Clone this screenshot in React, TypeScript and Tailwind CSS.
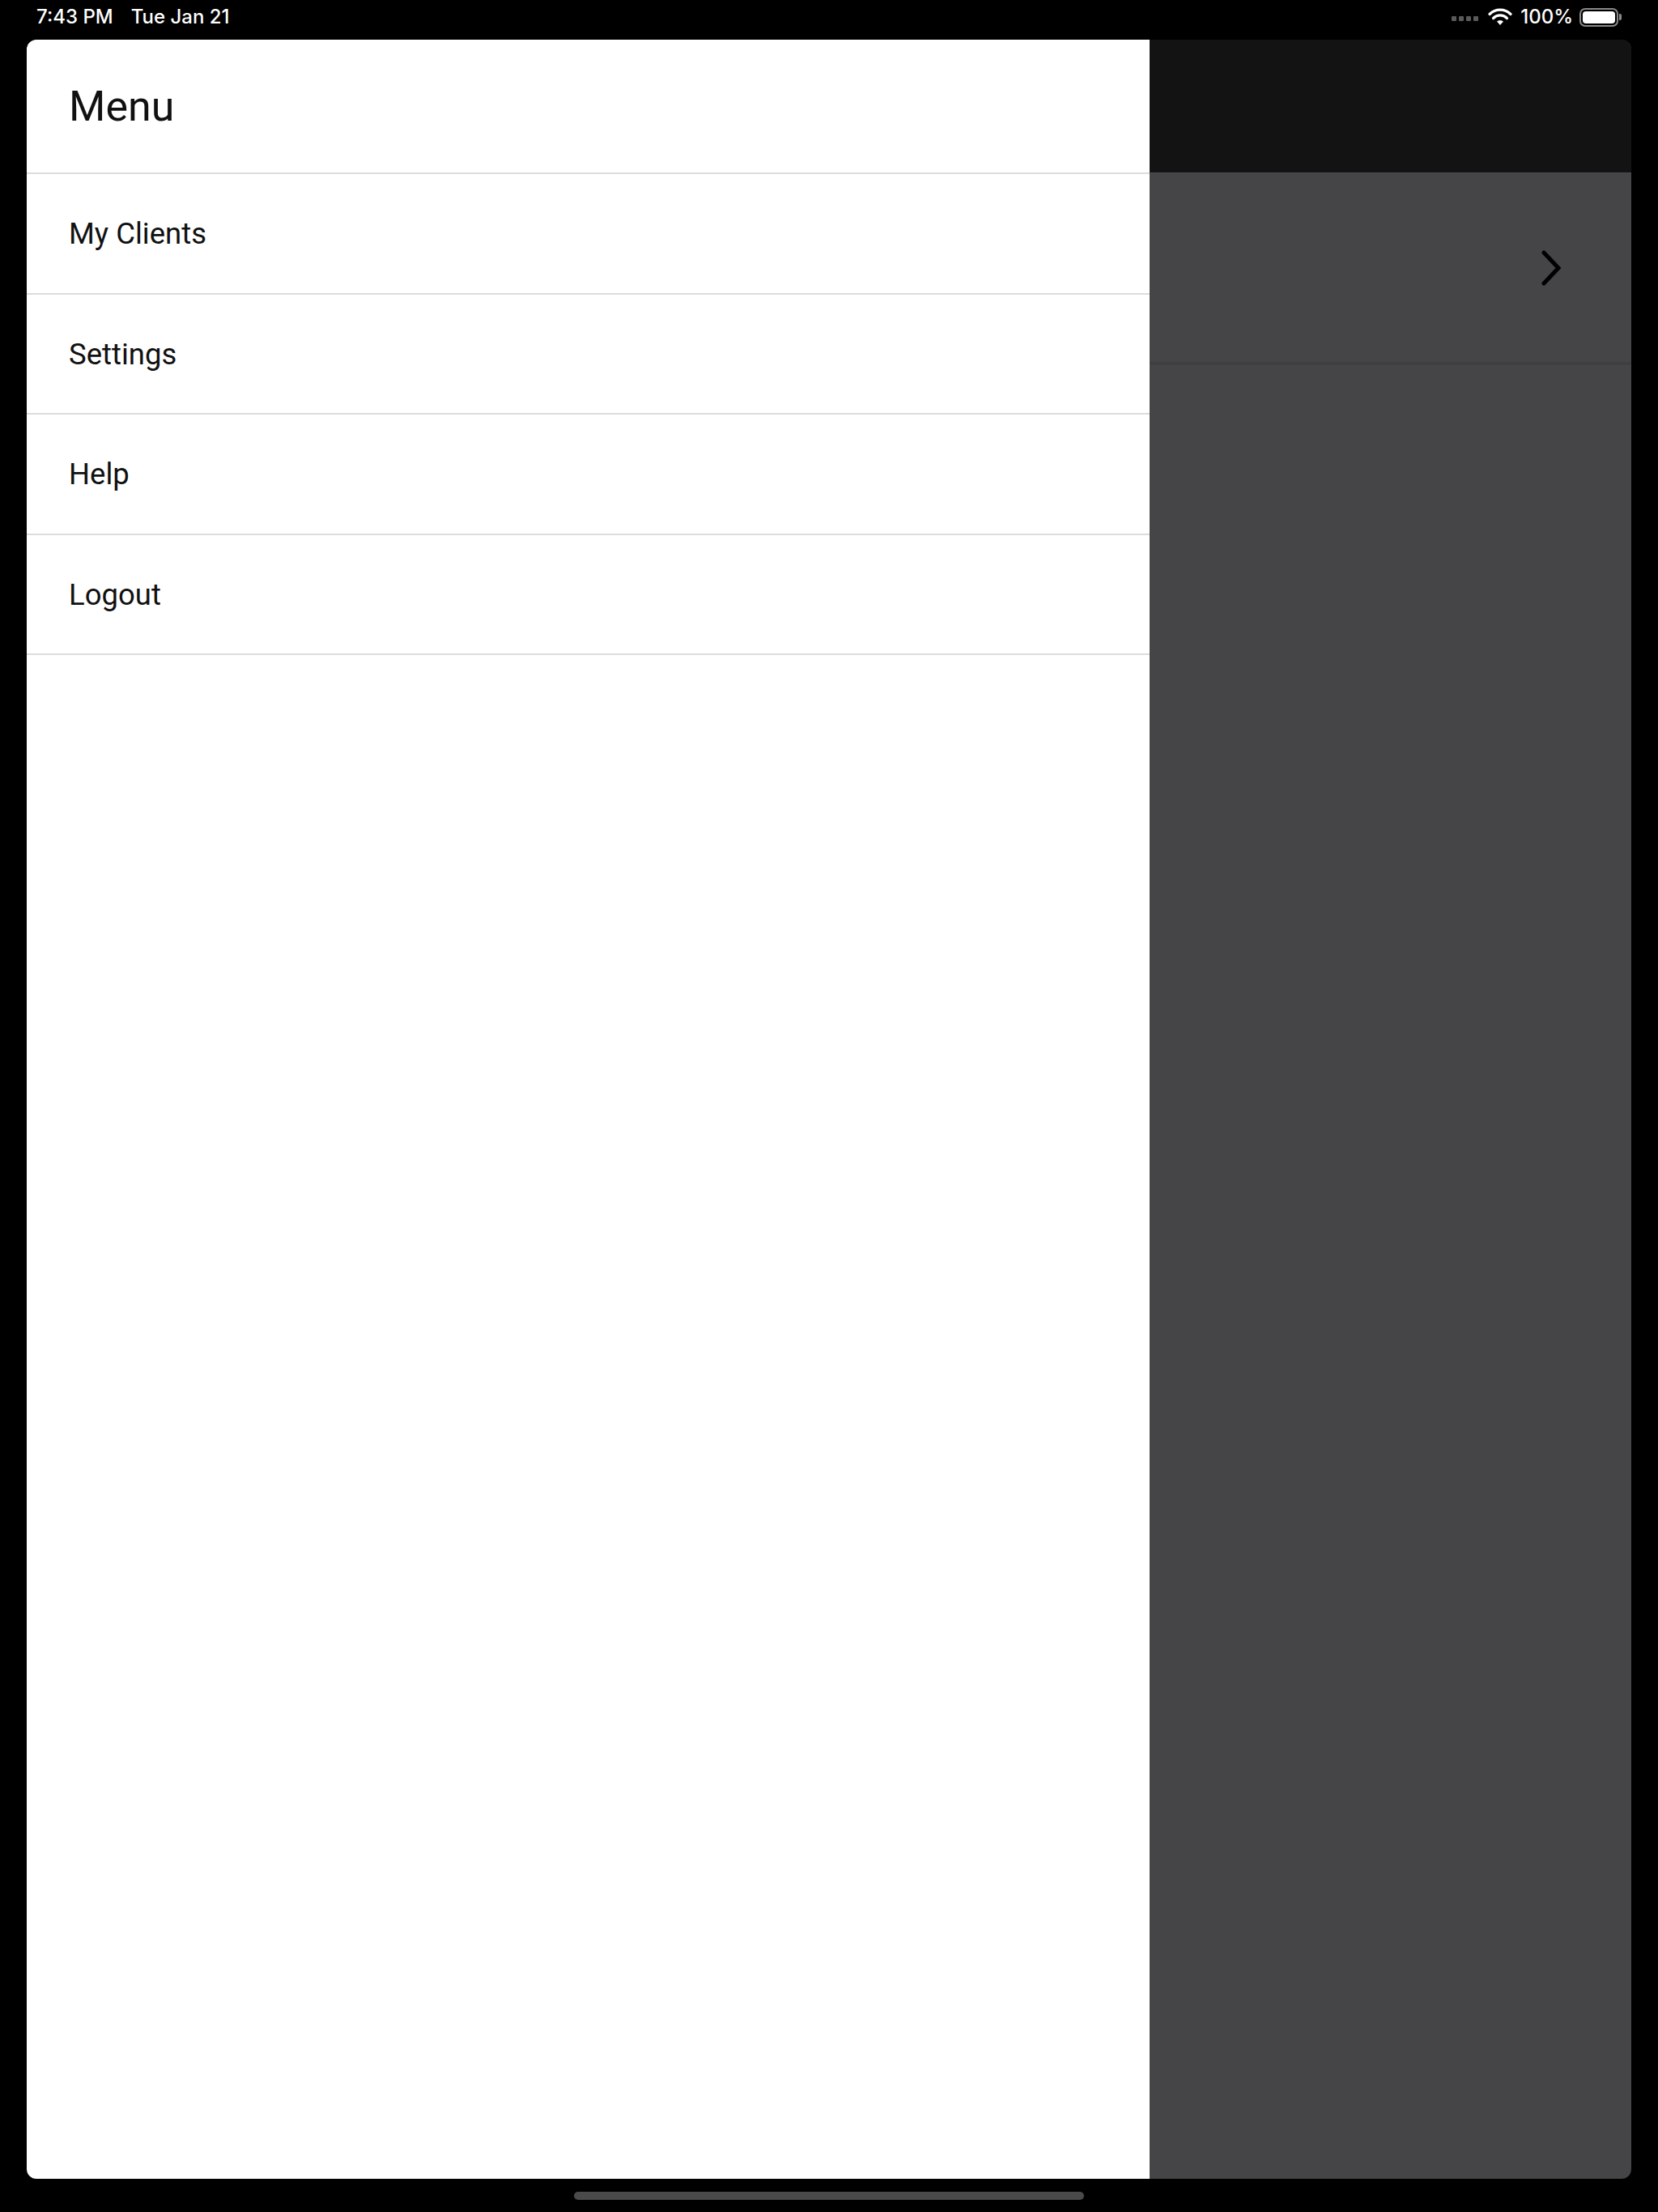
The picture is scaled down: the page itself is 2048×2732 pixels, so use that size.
import React from 'react';

const menuItems = ['My Clients', 'Settings', 'Help', 'Logout'];

const StatusBar = () => (
    <div className="h-[49px] flex items-start justify-between pl-[45px] pr-[45px] pt-[6px] text-white text-[24px] leading-[30px]" style={{ fontFamily: 'Inter, "Liberation Sans", sans-serif' }}>
        <div className="flex gap-[22px] font-medium">
            <span>7:43 PM</span>
            <span>Tue Jan 21</span>
        </div>
        <div className="flex items-center gap-[8px]">
            <div className="flex gap-[3px] items-center mt-[4px] mr-[4px]">
                {[0, 1, 2, 3].map(i => (
                    <span key={i} className="w-[6px] h-[6px] rounded-[1px] bg-[#5a5a5a]" />
                ))}
            </div>
            <svg width="30" height="22" viewBox="0 0 30 22">
                <path d="M15 21 L11 16.5 A6 6 0 0 1 19 16.5 Z" fill="#fff" />
                <path d="M6.5 12.5 A12 12 0 0 1 23.5 12.5" stroke="#fff" strokeWidth="3.2" fill="none" strokeLinecap="round" />
                <path d="M2 7.5 A18.5 18.5 0 0 1 28 7.5" stroke="#fff" strokeWidth="3.2" fill="none" strokeLinecap="round" />
            </svg>
            <span className="font-medium ml-[2px]">100%</span>
            <div className="flex items-center">
                <div className="w-[48px] h-[23px] rounded-[7px] border-[2px] border-[#8a8a8a] p-[2px]">
                    <div className="w-full h-full rounded-[4px] bg-white" />
                </div>
                <div className="w-[3px] h-[8px] rounded-r-[2px] bg-[#8a8a8a] ml-[1px]" />
            </div>
        </div>
    </div>
);

const Drawer = () => (
    <div className="w-[1387px] shrink-0 bg-white flex flex-col" style={{ fontFamily: 'Roboto, "Liberation Sans", sans-serif' }}>
        <div className="h-[166px] flex items-center pl-[52px] pt-[2px] border-b-[2px] border-[#dcdcdc]">
            <h1 className="text-[52px] text-[#111] leading-none">Menu</h1>
        </div>
        {menuItems.map(item => (
            <div key={item} className="h-[148.5px] flex items-center pl-[52px] pt-[2px] border-b-[2px] border-[#dcdcdc]">
                <span className="text-[36.5px] text-[#111] leading-none">{item}</span>
            </div>
        ))}
    </div>
);

const Backdrop = () => (
    <div className="flex-1 flex flex-col bg-[#454547]">
        <div className="h-[165px] bg-[#131313] border-b-[1px] border-[#4c4c4e]" />
        <div className="h-[237px] flex items-center justify-end pr-[86px] border-b-[4px] border-[#3f3f41]">
            <svg width="26" height="44" viewBox="0 0 26 44">
                <polyline points="4,3 22,22 4,41" fill="none" stroke="#000" strokeWidth="5" strokeLinecap="round" strokeLinejoin="miter" />
            </svg>
        </div>
        <div className="flex-1" />
    </div>
);

const App = () => {
    return (
        <div className="w-[2048px] h-[2732px] bg-black flex flex-col">
            <StatusBar />
            <div className="ml-[33px] w-[1982px] h-[2642px] rounded-[12px] overflow-hidden flex">
                <Drawer />
                <Backdrop />
            </div>
            <div className="flex-1 flex justify-center pt-[16px]">
                <div className="w-[630px] h-[10px] rounded-full bg-[#4a4a4a]" />
            </div>
        </div>
    );
};

export default App;
